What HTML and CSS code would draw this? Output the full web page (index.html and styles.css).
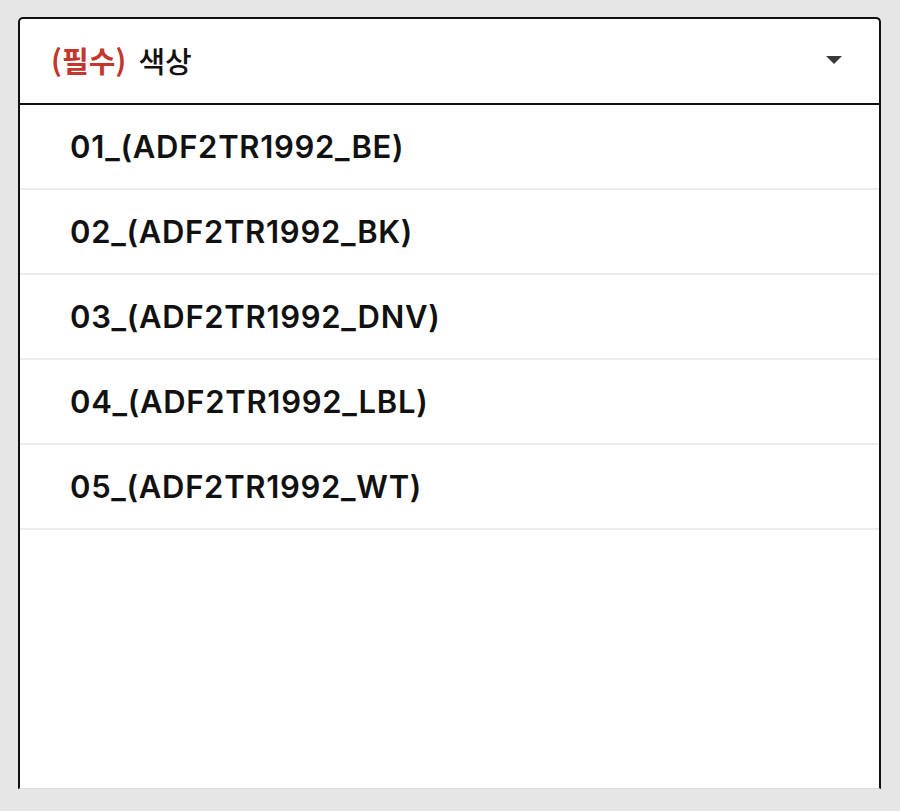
FILE: index.html
```html
<!DOCTYPE html>
<html lang="ko">
<head>
<meta charset="utf-8">
<title>색상 선택</title>
<link rel="stylesheet" href="styles.css">
</head>
<body>
<div class="panel">
  <div class="select-head">
    <span class="label"><span class="req">(필수)</span> 색상</span>
    <svg class="caret" width="16" height="8" viewBox="0 0 16 8"><path d="M0 0 H16 L8 8 Z" fill="#3a3a3a"/></svg>
  </div>
  <ul class="options">
    <li class="option">01_(ADF2TR1992_BE)</li>
    <li class="option">02_(ADF2TR1992_BK)</li>
    <li class="option">03_(ADF2TR1992_DNV)</li>
    <li class="option">04_(ADF2TR1992_LBL)</li>
    <li class="option">05_(ADF2TR1992_WT)</li>
  </ul>
</div>
</body>
</html>
```
FILE: styles.css
```css
html, body {
  margin: 0;
  padding: 0;
}
body {
  background: #e6e6e6;
  height: 811px;
  box-sizing: border-box;
  padding: 17px 19px 0 18px;
  overflow: hidden;
  font-family: Inter, "Noto Sans CJK KR", sans-serif;
}
.panel {
  background: #fff;
  height: 772px;
  border: 2px solid #111;
  border-bottom: 1px solid #dcdcdc;
  border-radius: 5px 5px 0 0;
  box-sizing: border-box;
  display: flex;
  flex-direction: column;
}
.select-head {
  height: 84px;
  border-bottom: 2px solid #111;
  display: flex;
  align-items: center;
  justify-content: space-between;
  padding: 0 37px 0 31px;
  flex-shrink: 0;
}
.label {
  font-family: "Noto Sans CJK KR", sans-serif;
  font-size: 29px;
  font-weight: 500;
  color: #111;
  position: relative;
  top: -1px;
}
.req {
  color: #c3372e;
  font-weight: 700;
  margin-right: 4px;
}
.caret {
  display: block;
  position: relative;
  top: -1px;
}
.options {
  list-style: none;
  margin: 0;
  padding: 0;
}
.option {
  height: 83px;
  border-bottom: 2px solid #ececec;
  display: flex;
  align-items: center;
  padding-left: 50px;
  font-size: 31px;
  font-weight: 600;
  letter-spacing: 0.7px;
  color: #111;
}
```
